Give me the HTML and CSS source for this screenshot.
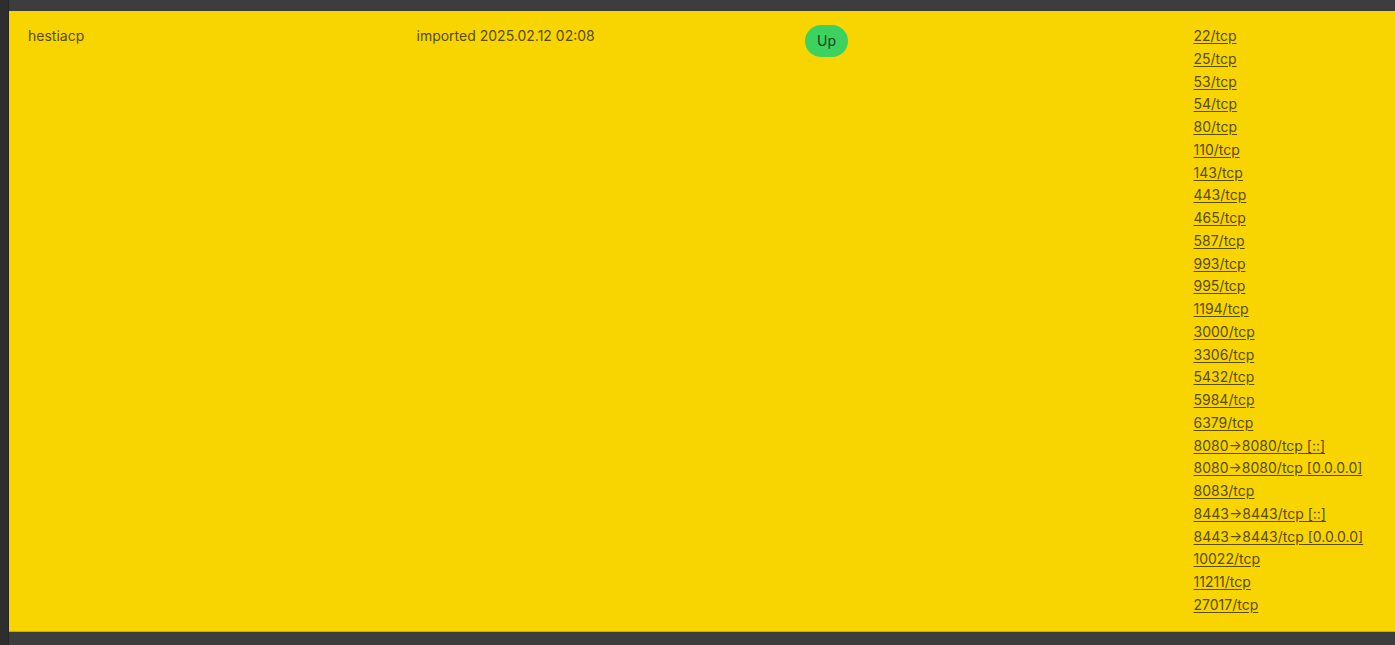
FILE: index.html
```html
<!DOCTYPE html>
<html>
<head>
<meta charset="utf-8">
<link rel="stylesheet" href="styles.css">
</head>
<body>
<div class="frame">
  <div class="rail"></div>
  <div class="main">
    <div class="row">
      <div class="cell">hestiacp</div>
      <div class="cell">imported 2025.02.12 02:08</div>
      <div class="cell"><span class="badge">Up</span></div>
      <div class="cell ports">
        <a href="#">22/tcp</a>
        <a href="#">25/tcp</a>
        <a href="#">53/tcp</a>
        <a href="#">54/tcp</a>
        <a href="#">80/tcp</a>
        <a href="#">110/tcp</a>
        <a href="#">143/tcp</a>
        <a href="#">443/tcp</a>
        <a href="#">465/tcp</a>
        <a href="#">587/tcp</a>
        <a href="#">993/tcp</a>
        <a href="#">995/tcp</a>
        <a href="#">1194/tcp</a>
        <a href="#">3000/tcp</a>
        <a href="#">3306/tcp</a>
        <a href="#">5432/tcp</a>
        <a href="#">5984/tcp</a>
        <a href="#">6379/tcp</a>
        <a href="#">8080→8080/tcp [::]</a>
        <a href="#">8080→8080/tcp [0.0.0.0]</a>
        <a href="#">8083/tcp</a>
        <a href="#">8443→8443/tcp [::]</a>
        <a href="#">8443→8443/tcp [0.0.0.0]</a>
        <a href="#">10022/tcp</a>
        <a href="#">11211/tcp</a>
        <a href="#">27017/tcp</a>
      </div>
    </div>
  </div>
</div>
</body>
</html>
```

FILE: styles.css
```css
html, body {
  margin: 0;
  padding: 0;
  height: 100%;
  background: #3d3d3d;
  overflow: hidden;
}
.frame {
  display: flex;
  height: 645px;
}
.rail {
  width: 8px;
  flex: none;
  background: #2e2e2e;
  border-right: 1px solid #262626;
}
.main {
  flex: 1;
  padding-top: 11px;
}
.row {
  display: grid;
  grid-template-columns: 388.5px 388.5px 388.5px 1fr;
  background: #f8d500;
  padding: 14px 0 14px;
  border-bottom: 1px solid #c9ad00;
  font-family: Inter, "Noto Sans", sans-serif;
  font-size: 14px;
  line-height: 22.75px;
  color: #5a4b00;
}
.cell {
  padding-left: 19px;
}
.badge {
  display: inline-block;
  background: #3dd160;
  color: #14421f;
  border-radius: 16px;
  height: 32px;
  line-height: 32px;
  padding: 0 12px;
}
.ports {
  display: flex;
  flex-direction: column;
  align-items: flex-start;
}
.ports a {
  color: #5a4b00;
  text-decoration: underline;
  text-underline-offset: 2px;
  white-space: nowrap;
}
```
